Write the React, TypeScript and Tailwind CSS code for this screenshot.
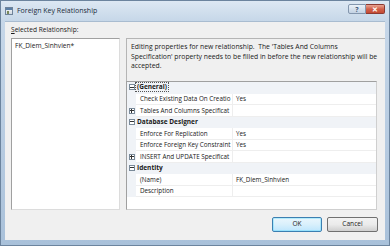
import React from "react";

const font = { fontFamily: '"Open Sans", "Noto Sans", sans-serif' };

function Box({ open }: { open: boolean }) {
  return (
    <div className="w-[6px] h-[6px] border border-[#7a8a99] bg-white flex items-center justify-center relative shrink-0">
      <div className="absolute w-[4px] h-[1px] bg-[#333] left-[0px] top-[1.5px]" />
      {!open && <div className="absolute w-[1px] h-[4px] bg-[#333] left-[1.5px] top-[0px]" />}
    </div>
  );
}

type Row =
  | { kind: "cat"; label: string; focus?: boolean }
  | { kind: "prop"; label: string; value?: string; expandable?: boolean };

const rows: Row[] = [
  { kind: "cat", label: "(General)", focus: true },
  { kind: "prop", label: "Check Existing Data On Creatio", value: "Yes" },
  { kind: "prop", label: "Tables And Columns Specificat", expandable: true },
  { kind: "cat", label: "Database Designer" },
  { kind: "prop", label: "Enforce For Replication", value: "Yes" },
  { kind: "prop", label: "Enforce Foreign Key Constraint", value: "Yes" },
  { kind: "prop", label: "INSERT And UPDATE Specificat", expandable: true },
  { kind: "cat", label: "Identity" },
  { kind: "prop", label: "(Name)", value: "FK_Diem_Sinhvien" },
  { kind: "prop", label: "Description", value: "" },
];

export default function App() {
  return (
    <div
      className="w-[390px] h-[246px] overflow-hidden bg-gradient-to-b from-[#c9d9ea] via-[#b9cde2] to-[#a9c1da] border border-[#6c849e] flex flex-col text-[6.6px] text-[#1a1a1a]"
      style={font}
    >
      {/* title bar */}
      <div className="h-[20px] shrink-0 flex items-center pl-[4px] pr-[4px] bg-gradient-to-b from-[#dde8f3] to-[#c6d7e8]">
        <div className="w-[8px] h-[8px] mr-[4px] border border-[#6f839a] bg-gradient-to-b from-[#fafafa] to-[#cfd8e2] relative">
          <div className="absolute left-0 top-0 w-full h-[2px] bg-[#5b7fa6]" />
          <div className="absolute left-[1px] top-[3px] w-[2px] h-[3px] bg-[#7a8a5a]" />
        </div>
        <span className="text-[7px] text-[#1b2b3b]">Foreign Key Relationship</span>
        <div className="ml-auto flex items-start self-start mt-[3px]">
          <div className="w-[18px] h-[10px] rounded-l-[2px] border border-[#8396ad] bg-gradient-to-b from-[#eaf1f8] to-[#c3d2e3] flex items-center justify-center text-[7px] font-bold text-[#3d5a7a] leading-none">
            ?
          </div>
          <div className="w-[19px] h-[10px] rounded-r-[2px] border border-[#8c3a32] border-l-0 bg-gradient-to-b from-[#e8a493] via-[#d2614b] to-[#c44a33] flex items-center justify-center text-[7px] font-bold text-white leading-none">
            ✕
          </div>
        </div>
      </div>
      {/* content */}
      <div className="flex-1 mx-[4px] mb-[5px] bg-[#f0f0f0] border-t border-[#a9bcd0] flex flex-col px-[6px]">
        <div className="h-[16px] pt-[5px] leading-none">
          <span className="underline">S</span>elected Relationship:
        </div>
        <div className="flex gap-[6px] h-[172px]">
          <div className="w-[109px] h-full bg-white border border-[#a0a0a0] border-r-[#dcdcdc] border-b-[#dcdcdc] pl-[3px] pt-[4px] leading-none">
            FK_Diem_Sinhvien*
          </div>
          <div className="flex-1 flex flex-col -mr-[6px]">
            <div className="h-[43px] border-t border-l border-[#b5b5b5] pl-[4px] pt-[3px] leading-[9.5px] text-[6.8px] whitespace-nowrap overflow-hidden">
              <div>Editing properties for new relationship.&nbsp; The 'Tables And Columns</div>
              <div>Specification' property needs to be filled in before the new relationship will be</div>
              <div>accepted.</div>
            </div>
            <div className="w-[251px] flex-1 bg-white border border-[#a0a0a0] border-r-[#cfcfcf] border-b-[#cfcfcf] flex flex-col text-[6.3px]">
              {rows.map((r, i) =>
                r.kind === "cat" ? (
                  <div key={i} className="h-[11.5px] shrink-0 bg-[#f0f3f7] flex items-center border-b border-[#f0f3f7]">
                    <div className="w-[9px] flex justify-center">
                      <Box open />
                    </div>
                    <span
                      className={
                        "font-bold px-[1px] leading-[8px] text-[6.5px] " +
                        (r.focus ? "outline outline-1 outline-dotted outline-[#555]" : "")
                      }
                    >
                      {r.label}
                    </span>
                  </div>
                ) : (
                  <div key={i} className="h-[11.5px] shrink-0 flex items-stretch">
                    <div className="w-[9px] bg-[#f0f3f7] flex items-center justify-center">
                      {r.expandable && <Box open={false} />}
                    </div>
                    <div className="w-[97px] pl-[4px] flex items-center border-b border-r border-[#eeeeee] whitespace-nowrap overflow-hidden">
                      {r.label}
                    </div>
                    <div className="flex-1 pl-[3px] flex items-center border-b border-[#eeeeee] whitespace-nowrap">
                      {r.value}
                    </div>
                  </div>
                )
              )}
            </div>
          </div>
        </div>
        <div className="flex justify-end gap-[5px] mt-[7px] pr-[1px]">
          <button className="w-[50px] h-[15px] rounded-[2px] border border-[#3c7fb1] bg-gradient-to-b from-[#eaf6fd] via-[#d9f0fc] to-[#bee6fd] text-[6.6px] leading-none shadow-[inset_0_0_0_1px_#48d8fd55]">
            OK
          </button>
          <button className="w-[51px] h-[15px] rounded-[2px] border border-[#707070] bg-gradient-to-b from-[#f2f2f2] via-[#ebebeb] to-[#cfcfcf] text-[6.6px] leading-none">
            Cancel
          </button>
        </div>
      </div>
    </div>
  );
}
